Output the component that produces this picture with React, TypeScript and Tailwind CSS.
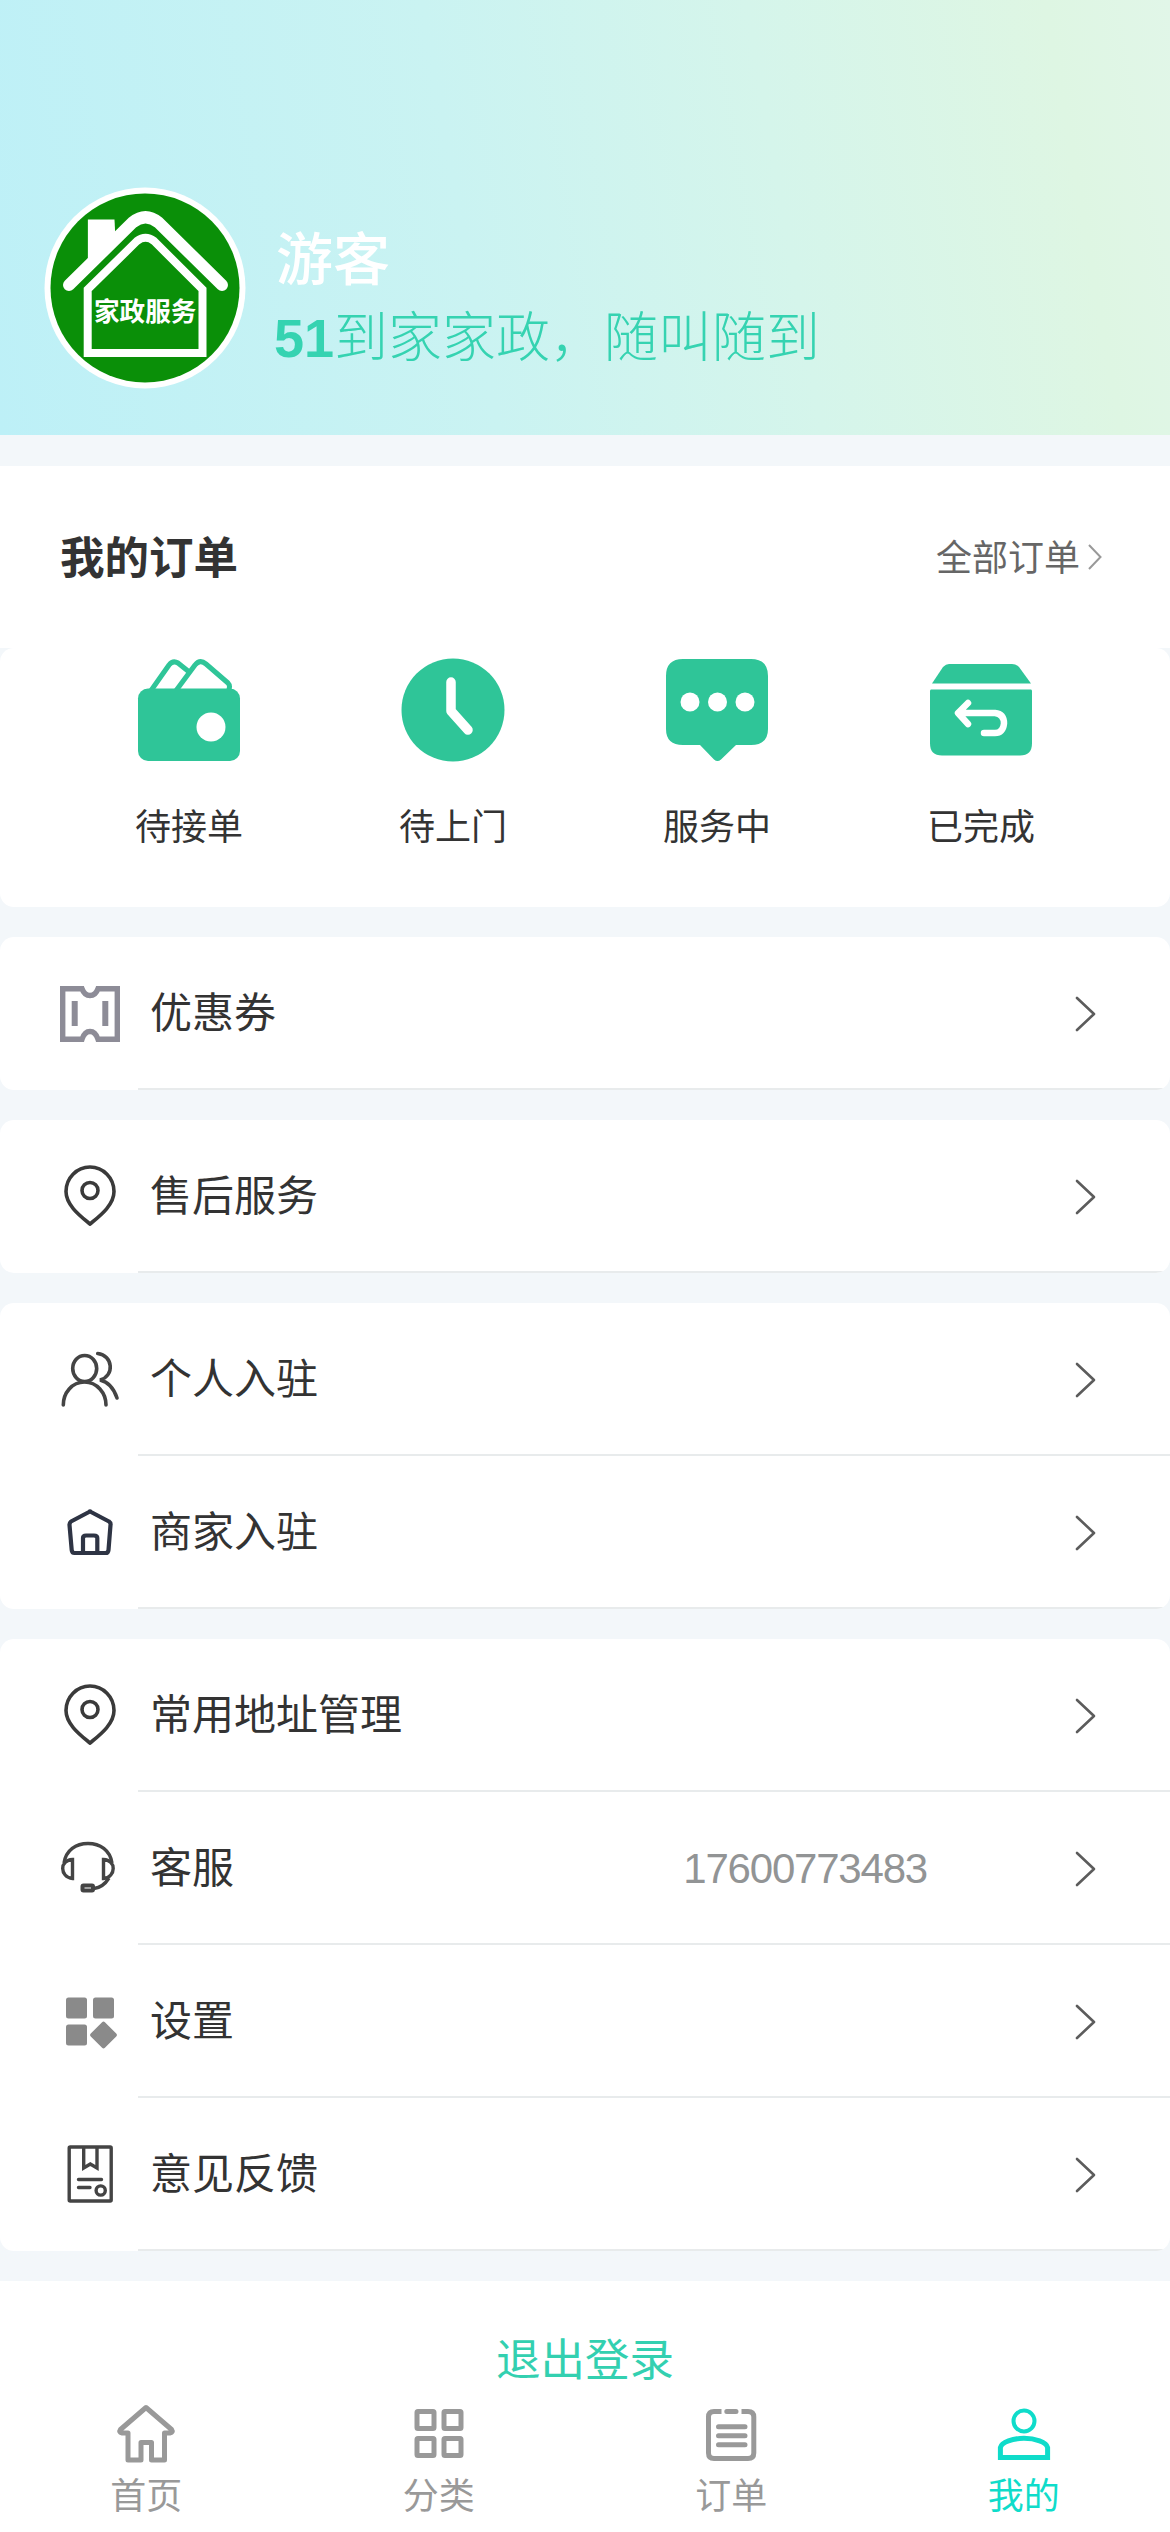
import React from "react";

const Chevron = () => (
  <svg width="24" height="38" viewBox="0 0 24 38" fill="none" className="shrink-0">
    <path d="M3 3L20 19L3 35" stroke="#5c5c5c" strokeWidth="2.6" strokeLinecap="round" strokeLinejoin="round" />
  </svg>
);

const Logo = () => (
  <svg width="202" height="202" viewBox="44.5 187 202 202" className="shrink-0">
    <circle cx="145.5" cy="288" r="100.5" fill="#fff" />
    <circle cx="145.5" cy="288" r="94.5" fill="#0a8f08" />
    <path d="M88.4 219.5H115L116 240L88.4 266Z" fill="#fff" />
    <g fill="none" stroke="#fff">
      <path d="M69.5 285L133 222.5Q146 212 159 222.5L222.5 285" strokeWidth="12" strokeLinecap="round" />
      <path d="M88.2 353V289.5L137.5 241Q146 234.5 154.5 241L203 289.5V353Z" strokeWidth="8" />
    </g>
    <text
      x="145.7"
      y="321"
      textAnchor="middle"
      fontSize="25.6"
      fontWeight="700"
      fill="#fff"
      className="font-['Noto_Sans_CJK_SC',sans-serif]"
    >
      家政服务
    </text>
  </svg>
);

const Wallet = () => (
  <svg width="104" height="104" viewBox="0 0 104 104">
    <g fill="#fff" stroke="#2fc598" strokeWidth="5" strokeLinejoin="round">
      <path d="M13 34L32 7Q36 2 41 5L56 17L40 34Z" />
      <path d="M38 34L58 7Q63 1 69 6L91 25Q94 28 91 34Z" />
    </g>
    <rect x="1" y="30.5" width="102" height="72.5" rx="10" fill="#2fc598" />
    <circle cx="74" cy="69" r="14.5" fill="#fff" />
  </svg>
);

const Clock = () => (
  <svg width="104" height="104" viewBox="0 0 104 104">
    <circle cx="52" cy="52" r="51.5" fill="#2fc598" />
    <path d="M50 24V53L67 72" fill="none" stroke="#fff" strokeWidth="9.5" strokeLinecap="round" strokeLinejoin="round" />
  </svg>
);

const Bubble = () => (
  <svg width="104" height="104" viewBox="0 0 104 104">
    <path
      d="M18 1H86Q103 1 103 18V71Q103 87 86 87H71L56 101.500Q52.500 104.500 49 101.500L35 87H18Q1 87 1 71V18Q1 1 18 1Z"
      fill="#2fc598"
    />
    <circle cx="25" cy="44" r="9.500" fill="#fff" />
    <circle cx="52.500" cy="44" r="9.500" fill="#fff" />
    <circle cx="80" cy="44" r="9.500" fill="#fff" />
  </svg>
);

const Box = () => (
  <svg width="104" height="104" viewBox="0 0 104 104">
    <path d="M20 6H83Q87 6 90 9L102 25.500H3L14 9Q17 6 20 6Z" fill="#2fc598" />
    <path d="M2 31.500H102Q103 31.500 103 33.500V85.500Q103 97.500 91 97.500H13Q1 97.500 1 85.500V33.500Q1 31.500 2 31.500Z" fill="#2fc598" />
    <path
      d="M39 45L29 55L39 66M31 55H66Q75 56 75 65.500Q74 75 66 75H55"
      fill="none"
      stroke="#fff"
      strokeWidth="6.500"
      strokeLinecap="round"
      strokeLinejoin="round"
    />
  </svg>
);

type IconProps = { children: React.ReactNode; color: string; width: number };

const LineIcon = ({ children, color, width }: IconProps) => (
  <svg
    width="60"
    height="62"
    viewBox="0 0 60 62"
    fill="none"
    stroke={color}
    strokeWidth={width}
    className="-mt-[3px] shrink-0"
  >
    {children}
  </svg>
);

const Coupon = () => (
  <LineIcon color="#8d8c97" width={5.4}>
    <path d="M2.700 7.700H22Q24.500 14.500 30 14.500T38 7.700H57.300V58.300H38Q35.500 50.500 30 50.500T22 58.300H2.700Z" />
    <path d="M14.700 20V45M45.300 20V45" strokeWidth="6" />
  </LineIcon>
);

const Pin = () => (
  <LineIcon color="#3a3a3a" width={3.6}>
    <path d="M30 60C21 52.500 6 41.500 6 27.500A24 24.500 0 0 1 54 27.500C54 41.500 39 52.500 30 60Z" />
    <circle cx="30" cy="26.500" r="8" />
  </LineIcon>
);

const People = () => (
  <LineIcon color="#444" width={3.6}>
    <ellipse cx="24.700" cy="21.500" rx="12" ry="13" />
    <path
      d="M3.300 58C3.300 46 12 35 24.500 35S46 46 46 58M37.700 6.500C53 8 55 29 40 33C49 35 54 42 57 51"
      strokeLinecap="round"
    />
  </LineIcon>
);

const Shop = () => (
  <LineIcon color="#2e3444" width={4.2}>
    <path
      d="M29 12Q30 11 31 12L49 21.500Q51 23 50.500 25L48.500 50Q48.200 53 45.500 53H14.500Q12 53 11.700 50L9.500 25Q9.300 23 11 21.500Z"
      strokeLinejoin="round"
    />
    <path d="M23 52V38Q23 35.500 26 35.500H34Q37.300 35.500 37.300 38V52" />
  </LineIcon>
);

const Headset = () => (
  <LineIcon color="#444" width={3.4}>
    <path d="M4 27C6 14 16 7.500 28 7.500S50 14 52 27" />
    <path d="M12.500 23.500V42.500C6 42 2.700 37 2.700 32.500S6 24 12.500 23.500ZM43.500 23.500V42.500C50 42 53.200 37 53.200 32.500S50 24 43.500 23.500Z" />
    <path d="M49 42Q43 51.500 34 52.500" />
    <rect x="22.500" y="49.500" width="10.500" height="5" rx="1" strokeWidth="4" />
  </LineIcon>
);

const Blocks = () => (
  <LineIcon color="none" width={0}>
    <g fill="#8a8a8a">
      <rect x="6" y="8.500" width="21" height="21" rx="2.500" />
      <rect x="33" y="8.500" width="21" height="21" rx="2.500" />
      <rect x="6" y="35.500" width="21" height="21" rx="2.500" />
      <rect x="33.500" y="36" width="20" height="20" rx="2" transform="rotate(45 43.500 46)" />
    </g>
  </LineIcon>
);

const Feedback = () => (
  <LineIcon color="#444" width={3.4}>
    <rect x="9.200" y="5" width="42" height="54" rx="1" />
    <path d="M23.700 5V26L30.300 22L37 26V5" />
    <path d="M18.500 37.500H41.500M18.500 45.500H30" strokeLinecap="round" />
    <circle cx="40.700" cy="48.500" r="4.600" />
  </LineIcon>
);

const orders = [
  { label: "待接单", icon: <Wallet /> },
  { label: "待上门", icon: <Clock /> },
  { label: "服务中", icon: <Bubble /> },
  { label: "已完成", icon: <Box /> },
];

const groups = [
  [{ label: "优惠券", icon: <Coupon /> }],
  [{ label: "售后服务", icon: <Pin /> }],
  [
    { label: "个人入驻", icon: <People /> },
    { label: "商家入驻", icon: <Shop /> },
  ],
  [
    { label: "常用地址管理", icon: <Pin /> },
    { label: "客服", icon: <Headset />, value: "17600773483" },
    { label: "设置", icon: <Blocks /> },
    { label: "意见反馈", icon: <Feedback /> },
  ],
];

const tabs = [
  {
    label: "首页",
    icon: (
      <path
        d="M30 3.500L4.500 25.500Q2.500 28.500 6 29H12V56H25V38.500H35.500V56H48.500V29H54Q57.500 28.500 55.500 25.500Z"
        strokeLinejoin="round"
      />
    ),
  },
  {
    label: "分类",
    icon: (
      <>
        <rect x="8" y="7.500" width="17" height="17" rx="1" />
        <rect x="35" y="7.500" width="17" height="17" rx="1" />
        <rect x="8" y="34.500" width="17" height="17" rx="1" />
        <rect x="35" y="34.500" width="17" height="17" rx="1" />
      </>
    ),
  },
  {
    label: "订单",
    icon: (
      <>
        <path d="M20.500 7.500H13Q7.500 7.500 7.500 13V49Q7.500 54.500 13 54.500H47Q52.800 54.500 52.800 49V13Q52.800 7.500 47 7.500H40.500" />
        <path d="M25.800 7.500H35M17.500 22.700H44M17.500 31.700H44M17.500 40.700H44" strokeLinecap="round" />
      </>
    ),
  },
  {
    label: "我的",
    active: true,
    icon: (
      <>
        <circle cx="30" cy="17" r="10.500" strokeWidth="4" />
        <path d="M6.400 53.500V43.500C7.500 38 19 34.300 30 34.300S52.500 38 53.600 43.500V53.500Z" />
      </>
    ),
  },
];

const App = () => {
  return (
    <main className="flex h-[2532px] w-[1170px] flex-col overflow-hidden bg-[#f3f7fa] font-['Liberation_Sans','Noto_Sans_CJK_SC',sans-serif] text-[#333]">
      <header className="flex h-[435px] shrink-0 bg-[linear-gradient(80deg,#bdf0f7_0%,#caf3f2_40%,#d5f5eb_66%,#def6e3_90%,#e1f6e8_100%)] pt-[187px] pl-[44px]">
        <Logo />
        <div className="flex flex-col pt-[35px] pl-[28px] whitespace-nowrap">
          <p className="pl-[2px] text-[57px] leading-[76px] font-medium text-white">游客</p>
          <p className="text-[54px] leading-[80px] font-light text-[#35d3b1]">
            <span className="font-bold">51</span>到家家政，随叫随到
          </p>
        </div>
      </header>

      <section className="mt-[31px] flex h-[182px] shrink-0 items-center justify-between bg-white pt-[3px] pr-[67px] pl-[60px]">
        <h2 className="text-[44.5px] leading-[60px] font-bold">我的订单</h2>
        <div className="flex items-center gap-[7px] text-[36px] leading-[50px] text-[#666]">
          全部订单
          <svg width="16" height="28" viewBox="0 0 16 28" fill="none" className="-mt-[4px]">
            <path d="M2 2L13.500 14L2 26" stroke="#999" strokeWidth="2" />
          </svg>
        </div>
      </section>

      <section className="grid h-[259px] shrink-0 grid-cols-4 rounded-[14px] bg-white px-[57px] pt-[10px]">
        {orders.map(({ label, icon }) => (
          <div key={label} className="flex flex-col items-center">
            {icon}
            <span className="mt-[40px] text-[36px] leading-[52px]">{label}</span>
          </div>
        ))}
      </section>

      {groups.map((rows, i) => (
        <section key={i} className="mt-[30px] shrink-0 overflow-hidden rounded-[14px] bg-white">
          {rows.map(({ label, icon, value }: { label: string; icon: React.ReactNode; value?: string }) => (
            <div key={label} className="flex h-[153px] pl-[60px]">
              <div className="flex w-[78px] items-center">{icon}</div>
              <div className="flex flex-1 items-center border-b-2 border-[#e8ebec] pt-[3px] pr-[72px] pl-[12px]">
                <span className="flex-1 text-[42px] leading-[60px]">{label}</span>
                {value && (
                  <span className="mr-[147px] text-[42px] leading-[60px] tracking-[-1.2px] text-[#929495]">
                    {value}
                  </span>
                )}
                <Chevron />
              </div>
            </div>
          ))}
        </section>
      ))}

      <footer className="mt-[30px] flex flex-1 flex-col bg-white">
        <button className="mt-[48px] text-[44.5px] leading-[64px] text-[#33d0b0]">退出登录</button>
        <nav className="mt-[11px] grid grid-cols-4">
          {tabs.map(({ label, icon, active }) => (
            <div
              key={label}
              className={`flex flex-col items-center ${active ? "text-[#0fdcca]" : "text-[#999]"}`}
            >
              <svg width="60" height="60" viewBox="0 0 60 60" fill="none" stroke="currentColor" strokeWidth="5">
                {icon}
              </svg>
              <span className="mt-[7px] text-[36px] leading-[52px]">{label}</span>
            </div>
          ))}
        </nav>
      </footer>
    </main>
  );
};

export default App;
